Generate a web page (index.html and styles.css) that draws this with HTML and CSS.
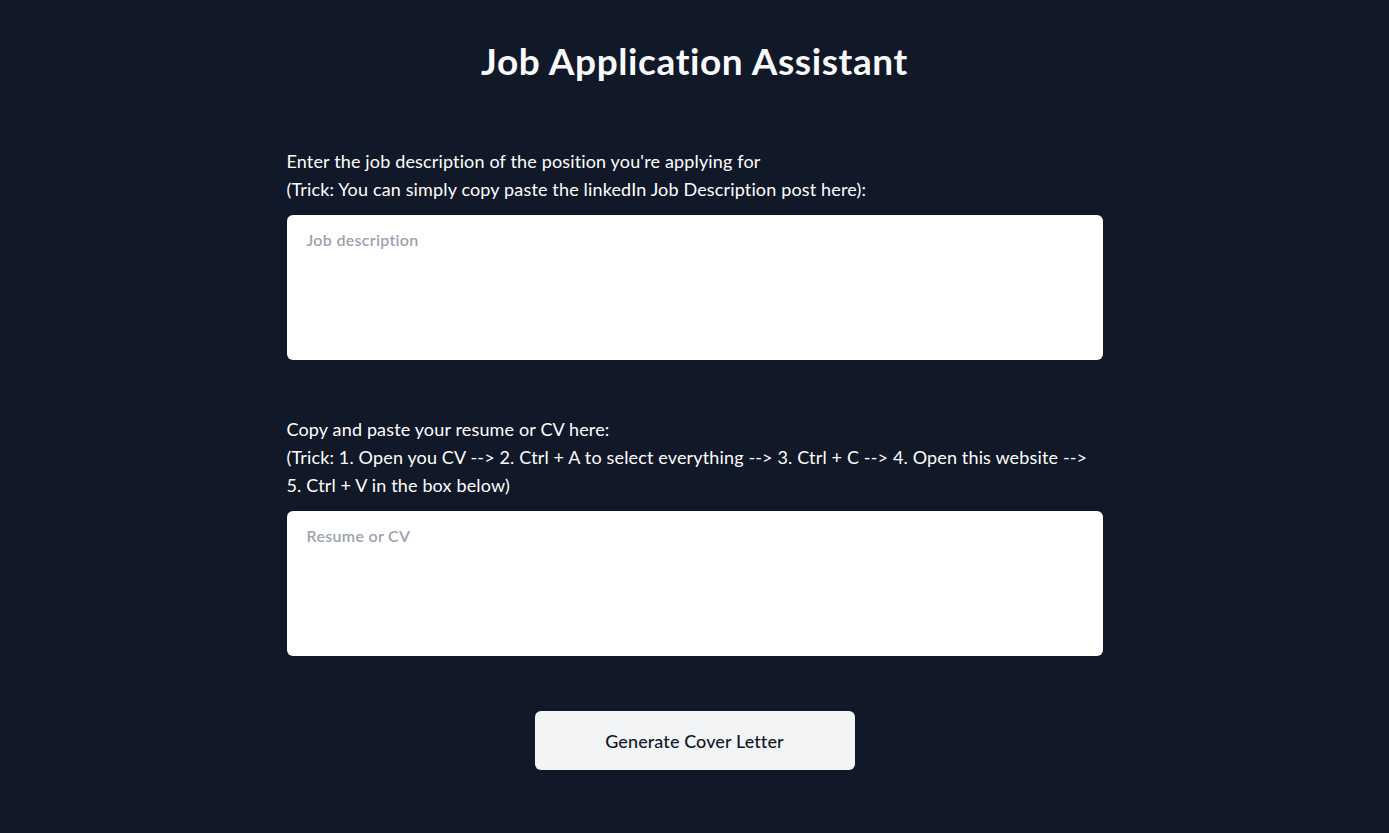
FILE: index.html
```html
<!DOCTYPE html>
<html lang="en">
<head>
<meta charset="utf-8">
<title>Job Application Assistant</title>
<link rel="stylesheet" href="styles.css">
</head>
<body>
<main class="page">
  <h1 class="title">Job Application Assistant</h1>
  <form class="form">
    <section class="field">
      <label class="label" for="job">Enter the job description of the position you're applying for<br>(Trick: You can simply copy paste the linkedIn Job Description post here):</label>
      <textarea id="job" class="input" placeholder="Job description"></textarea>
    </section>
    <section class="field">
      <label class="label" for="cv">Copy and paste your resume or CV here:<br>(Trick: 1. Open you CV --&gt; 2. Ctrl + A to select everything --&gt; 3. Ctrl + C --&gt; 4. Open this website --&gt; 5. Ctrl + V in the box below)</label>
      <textarea id="cv" class="input" placeholder="Resume or CV"></textarea>
    </section>
    <div class="actions">
      <button type="button" class="btn">Generate Cover Letter</button>
    </div>
  </form>
</main>
</body>
</html>
```

FILE: styles.css
```css
* { box-sizing: border-box; }
html, body {
  margin: 0;
  padding: 0;
  background: #111827;
  height: 100%;
}
body {
  font-family: "Lato", "Noto Sans", sans-serif;
  color: #f9fafb;
}
.page {
  width: 816px;
  margin: 0 auto;
  padding-top: 41px;
}
.title {
  margin: 0;
  text-align: center;
  font-size: 37px;
  line-height: 40px;
  font-weight: 700;
  letter-spacing: 0.6px;
  color: #f9fafb;
}
.form {
  display: flex;
  flex-direction: column;
  gap: 55px;
  margin-top: 66px;
}
.field {
  display: flex;
  flex-direction: column;
  gap: 12px;
}
.label {
  font-size: 18px;
  line-height: 28px;
  letter-spacing: 0.15px;
  color: #ffffff;
}
.input {
  display: block;
  width: 100%;
  height: 145px;
  border: none;
  border-radius: 6px;
  background: #ffffff;
  padding: 15px 20px;
  font-family: inherit;
  font-size: 16px;
  line-height: 20px;
  letter-spacing: 0.3px;
  color: #111827;
  resize: none;
  outline: none;
}
.input::placeholder {
  color: #9ca3af;
  font-weight: 600;
}
.actions {
  display: flex;
  justify-content: center;
}
.btn {
  width: 320px;
  height: 59px;
  border: none;
  border-radius: 6px;
  background: #f3f4f6;
  color: #111827;
  font-family: inherit;
  font-size: 18px;
  font-weight: 500;
  letter-spacing: 0.1px;
  cursor: pointer;
}
```
